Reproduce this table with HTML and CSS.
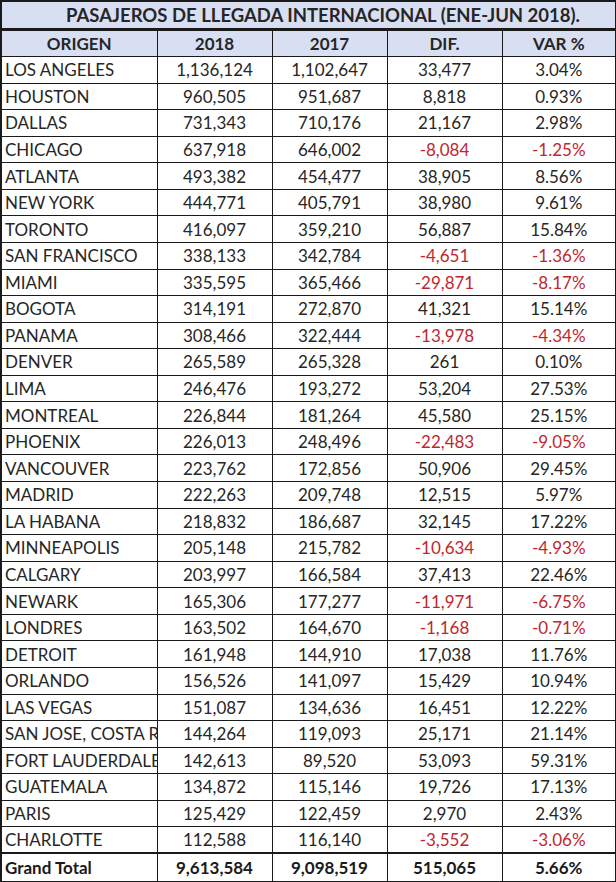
FILE: index.html
```html
<!DOCTYPE html>
<html>
<head>
<meta charset="utf-8">
<link rel="stylesheet" href="styles.css">
</head>
<body>
<table class="sheet">
<colgroup>
<col class="c-origin"><col class="c-num"><col class="c-num"><col class="c-num"><col class="c-var">
</colgroup>
<thead>
<tr class="title-row"><th colspan="5">PASAJEROS DE LLEGADA INTERNACIONAL (ENE-JUN 2018).</th></tr>
<tr class="head-row"><th>ORIGEN</th><th>2018</th><th>2017</th><th>DIF.</th><th>VAR %</th></tr>
</thead>
<tbody>
<tr><td>LOS ANGELES</td><td>1,136,124</td><td>1,102,647</td><td>33,477</td><td>3.04%</td></tr>
<tr><td>HOUSTON</td><td>960,505</td><td>951,687</td><td>8,818</td><td>0.93%</td></tr>
<tr><td>DALLAS</td><td>731,343</td><td>710,176</td><td>21,167</td><td>2.98%</td></tr>
<tr><td>CHICAGO</td><td>637,918</td><td>646,002</td><td class="neg">-8,084</td><td class="neg">-1.25%</td></tr>
<tr><td>ATLANTA</td><td>493,382</td><td>454,477</td><td>38,905</td><td>8.56%</td></tr>
<tr><td>NEW YORK</td><td>444,771</td><td>405,791</td><td>38,980</td><td>9.61%</td></tr>
<tr><td>TORONTO</td><td>416,097</td><td>359,210</td><td>56,887</td><td>15.84%</td></tr>
<tr><td>SAN FRANCISCO</td><td>338,133</td><td>342,784</td><td class="neg">-4,651</td><td class="neg">-1.36%</td></tr>
<tr><td>MIAMI</td><td>335,595</td><td>365,466</td><td class="neg">-29,871</td><td class="neg">-8.17%</td></tr>
<tr><td>BOGOTA</td><td>314,191</td><td>272,870</td><td>41,321</td><td>15.14%</td></tr>
<tr><td>PANAMA</td><td>308,466</td><td>322,444</td><td class="neg">-13,978</td><td class="neg">-4.34%</td></tr>
<tr><td>DENVER</td><td>265,589</td><td>265,328</td><td>261</td><td>0.10%</td></tr>
<tr><td>LIMA</td><td>246,476</td><td>193,272</td><td>53,204</td><td>27.53%</td></tr>
<tr><td>MONTREAL</td><td>226,844</td><td>181,264</td><td>45,580</td><td>25.15%</td></tr>
<tr><td>PHOENIX</td><td>226,013</td><td>248,496</td><td class="neg">-22,483</td><td class="neg">-9.05%</td></tr>
<tr><td>VANCOUVER</td><td>223,762</td><td>172,856</td><td>50,906</td><td>29.45%</td></tr>
<tr><td>MADRID</td><td>222,263</td><td>209,748</td><td>12,515</td><td>5.97%</td></tr>
<tr><td>LA HABANA</td><td>218,832</td><td>186,687</td><td>32,145</td><td>17.22%</td></tr>
<tr><td>MINNEAPOLIS</td><td>205,148</td><td>215,782</td><td class="neg">-10,634</td><td class="neg">-4.93%</td></tr>
<tr><td>CALGARY</td><td>203,997</td><td>166,584</td><td>37,413</td><td>22.46%</td></tr>
<tr><td>NEWARK</td><td>165,306</td><td>177,277</td><td class="neg">-11,971</td><td class="neg">-6.75%</td></tr>
<tr><td>LONDRES</td><td>163,502</td><td>164,670</td><td class="neg">-1,168</td><td class="neg">-0.71%</td></tr>
<tr><td>DETROIT</td><td>161,948</td><td>144,910</td><td>17,038</td><td>11.76%</td></tr>
<tr><td>ORLANDO</td><td>156,526</td><td>141,097</td><td>15,429</td><td>10.94%</td></tr>
<tr><td>LAS VEGAS</td><td>151,087</td><td>134,636</td><td>16,451</td><td>12.22%</td></tr>
<tr><td>SAN JOSE, COSTA RICA</td><td>144,264</td><td>119,093</td><td>25,171</td><td>21.14%</td></tr>
<tr><td>FORT LAUDERDALE</td><td>142,613</td><td>89,520</td><td>53,093</td><td>59.31%</td></tr>
<tr><td>GUATEMALA</td><td>134,872</td><td>115,146</td><td>19,726</td><td>17.13%</td></tr>
<tr><td>PARIS</td><td>125,429</td><td>122,459</td><td>2,970</td><td>2.43%</td></tr>
<tr><td>CHARLOTTE</td><td>112,588</td><td>116,140</td><td class="neg">-3,552</td><td class="neg">-3.06%</td></tr>
</tbody>
<tfoot>
<tr class="total-row"><td>Grand Total</td><td>9,613,584</td><td>9,098,519</td><td>515,065</td><td>5.66%</td></tr>
</tfoot>
</table>
</body>
</html>
```
FILE: styles.css
```css
html, body {
  margin: 0;
  background: #ffffff;
}

.sheet {
  border-collapse: collapse;
  table-layout: fixed;
  width: 615px;
  border: 2px solid #1a1a1a;
  font-family: Lato, "Open Sans", sans-serif;
  font-size: 17px;
  color: #262626;
}

.c-origin { width: 156px; }
.c-num { width: 115px; }
.c-var { width: 114px; }

.sheet th,
.sheet td {
  border: 1px solid #1a1a1a;
  padding: 0 3px;
  white-space: nowrap;
  overflow: hidden;
  text-align: center;
  line-height: 1;
}

.sheet td:first-child {
  text-align: left;
  padding-left: 3px;
}

.sheet tbody tr {
  height: 26.57px;
}

.title-row th {
  height: 26px;
  background: #d9dff2;
  font-weight: 700;
  font-size: 18.5px;
  padding-left: 32px;
  border-bottom: 3px solid #1a1a1a;
}

.head-row th {
  height: 25px;
  background: #d9dff2;
  font-weight: 700;
}

.total-row td {
  height: 27px;
  font-weight: 700;
  color: #1a1a1a;
  border-top: 2px solid #1a1a1a;
}

.sheet td.neg {
  color: #c0272d;
}
```
